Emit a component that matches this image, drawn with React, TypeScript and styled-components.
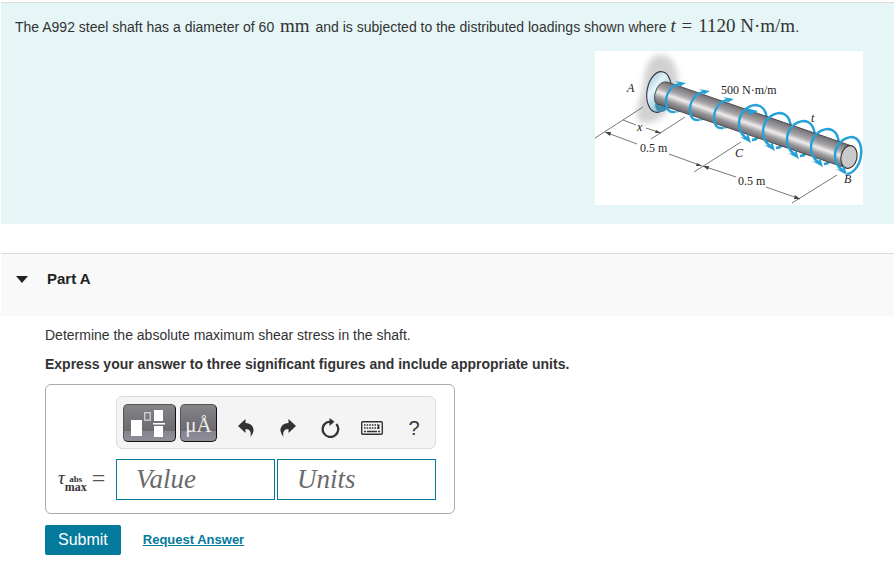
import React from "react";
import styled, { createGlobalStyle } from "styled-components";

const GlobalStyle = createGlobalStyle`
  * { box-sizing: border-box; }
  body {
    margin: 0;
    background: #fff;
    color: #333;
    font-family: "Liberation Sans", Arial, sans-serif;
    font-size: 14px;
    line-height: 20px;
  }
`;

const Page = styled.main`
  padding: 2px 0 16px 1px;
`;

const Problem = styled.section`
  display: flex;
  flex-direction: column;
  border-top: 1px solid #dcdcdc;
  background: #e6f6f7;
  padding: 12px 31px 19px 14px;
`;

const Statement = styled.p`
  margin: 0;
  line-height: 24px;
`;

const MathText = styled.span<{ $italic?: boolean; $spaced?: boolean }>`
  font-family: "Liberation Serif", "Times New Roman", serif;
  font-size: 19px;
  line-height: 20px;
  font-style: ${(p) => (p.$italic ? "italic" : "normal")};
  margin: 0 ${(p) => (p.$spaced ? 2 : 0)}px;
`;

const Figure = styled.figure`
  margin: 12px 0 0;
  align-self: flex-end;
  background: #fff;
  svg { display: block; }
`;

const PartHeader = styled.header`
  margin-top: 29px;
  border-top: 1px solid #dcdcdc;
  background: #f9f9f9;
  padding: 15px 15px 27px;
`;

const PartToggle = styled.button`
  display: flex;
  align-items: center;
  gap: 19px;
  border: 0;
  padding: 0;
  background: none;
  color: #222;
  font: bold 15px/20px "Liberation Sans", Arial, sans-serif;
`;

const PartBody = styled.section`
  padding: 9px 44px 0;
`;

const Paragraph = styled.p<{ $strong?: boolean }>`
  margin: 0 0 9px;
  font-weight: ${(p) => (p.$strong ? "bold" : "normal")};
`;

const AnswerBox = styled.div`
  display: grid;
  grid-template-columns: 58px auto;
  row-gap: 10px;
  width: fit-content;
  margin-top: 10px;
  border: 1px solid #aaa;
  border-radius: 6px;
  padding: 11px 18px 13px 12px;
`;

const Toolbar = styled.div`
  grid-column: 2;
  display: flex;
  align-items: center;
  border: 1px solid #ddd;
  border-radius: 6px;
  background: #f4f4f4;
  padding: 6px 0 6px 6px;
  height: 53px;
`;

const TemplateButton = styled.button<{ $wide?: boolean }>`
  width: ${(p) => (p.$wide ? 53 : 37)}px;
  height: 38px;
  margin-right: 4px;
  border: 1px solid #111;
  border-top-color: #555;
  border-left-color: #555;
  border-radius: 5px;
  padding: 0;
  background: linear-gradient(#858489, #6b6a6e 72%, #86858f 73%, #8e8d98);
  svg { display: block; }
`;

const IconButton = styled.button`
  display: flex;
  align-items: center;
  justify-content: center;
  width: 42px;
  height: 38px;
  border: 0;
  padding: 10px 0 0;
  background: none;
  color: #333;
  font: 20px/24px "Liberation Sans", Arial, sans-serif;
`;

const IconGroup = styled.div`
  display: flex;
  margin-left: 4px;
`;

const TauLabel = styled.label`
  display: flex;
  align-items: center;
  color: #333;
  font-family: "Liberation Serif", "Times New Roman", serif;
  padding-bottom: 4px;
`;

const Tau = styled.span`
  font-size: 19px;
  font-style: italic;
  line-height: 20px;
`;

const Subscript = styled.span`
  display: flex;
  flex-direction: column;
  align-items: center;
  margin: 13px 5px 0 0;
  font-size: 12px;
  font-weight: bold;
  line-height: 9px;
  small { font-size: 9px; font-weight: bold; line-height: 7px; }
`;

const Equals = styled.span`
  color: #555;
  font-size: 24px;
  line-height: 24px;
`;

const Fields = styled.div`
  display: flex;
  gap: 2px;
`;

const Field = styled.input`
  flex: 1;
  width: 159px;
  height: 41px;
  border: 1px solid #047a9c;
  border-radius: 0;
  padding: 0 19px;
  background: #fff;
  color: #333;
  font: italic 27px/36px "Liberation Serif", "Times New Roman", serif;
  &::placeholder { color: #6a6a6a; opacity: 1; }
`;

const Actions = styled.div`
  display: flex;
  align-items: center;
  gap: 22px;
  margin-top: 11px;
`;

const Submit = styled.button`
  height: 30px;
  border: 0;
  border-radius: 2px;
  padding: 0 13px;
  background: #047a9c;
  color: #fff;
  font: 16px/20px "Liberation Sans", Arial, sans-serif;
`;

const RequestLink = styled.a`
  color: #047a9c;
  font-size: 13px;
  font-weight: bold;
`;

const DiagramText = styled.text<{ $italic?: boolean }>`
  fill: #222;
  font-family: "Liberation Serif", "Times New Roman", serif;
  font-size: 12px;
  font-style: ${(p) => (p.$italic ? "italic" : "normal")};
`;

const nearLoops = [0, 1, 2];
const farLoops = [0, 1, 2, 3, 4];

function ShaftDiagram() {
  return (
    <svg width="268" height="154" viewBox="0 0 268 154" role="img" aria-label="Shaft fixed at A with distributed torques">
      <defs>
        <linearGradient id="steel" gradientUnits="userSpaceOnUse" x1="162" y1="63" x2="154" y2="86">
          <stop offset="0" stopColor="#77757a" />
          <stop offset="0.3" stopColor="#aaa7aa" />
          <stop offset="0.48" stopColor="#eeecec" />
          <stop offset="0.7" stopColor="#99979a" />
          <stop offset="1" stopColor="#5c5a5e" />
        </linearGradient>
        <linearGradient id="flange" x1="0" y1="0" x2="1" y2="1">
          <stop offset="0" stopColor="#8dbbd0" />
          <stop offset="0.35" stopColor="#e3f3fa" />
          <stop offset="0.6" stopColor="#b4d8e6" />
          <stop offset="1" stopColor="#3f8fb0" />
        </linearGradient>
        <filter id="soft" x="-30%" y="-30%" width="160%" height="160%">
          <feGaussianBlur stdDeviation="3" />
        </filter>
      </defs>

      <path d="M65 4C78 4 83 17 83 32C83 48 74 60 64 68C53 75 41 74 42 61C43 51 48 42 49 30C50 17 54 5 65 4Z" fill="#d2d1d1" filter="url(#soft)" />

      <path d="M48 56L0 87M90 66L56 88M28 69L41 74M51 77L66 82M10 81L42 93M74 103L107 115M108 115L141 126M99 121L146 91M171 136L205 148M197 152L242 124" stroke="#555" strokeWidth="0.8" fill="none" />
      <path d="M66 82L60 82L61 79ZM10 81L16 81L15 85ZM107 115L101 115L102 112ZM108 115L114 115L113 119ZM205 148L199 148L200 144Z" fill="#444" />

      {nearLoops.map((i) => (
        <path key={i} transform={`translate(${i * 24} ${i * 8})`} d="M80 61Q86 61 89 56" fill="none" stroke="#69bbe0" strokeWidth="1.6" />
      ))}
      {farLoops.slice(0, 4).map((i) => (
        <path key={i} transform={`translate(${i * 24} ${i * 8})`} d="M161 54C169 55 171 61 172 68M157 89Q161 89 163 86" fill="none" stroke="#26a0d6" strokeWidth="2.300" />
      ))}

      <ellipse cx="64" cy="41" rx="12" ry="20.5" transform="rotate(9 64 41)" fill="url(#flange)" stroke="#334" strokeWidth="1.1" />
      <path d="M60 52Q66 56 73 55Q72 61 65 61Q60 60 60 52Z" fill="#3f8dab" />
      <path d="M72 31Q66 30 62 37Q58 45 60 51Q62 54 66 54L251 117L257 95L72 31Z" fill="url(#steel)" stroke="#444" strokeWidth="0.9" />
      <ellipse cx="254" cy="106" rx="8" ry="11.5" transform="rotate(12 254 106)" fill="#c9c9cc" stroke="#333" strokeWidth="1.1" />

      {nearLoops.map((i) => (
        <g key={i} transform={`translate(${i * 24} ${i * 8})`}>
          <path d="M85 33C76 34 71 43 71 51C71 58 74 62 80 61" fill="none" stroke="#26a0d6" strokeWidth="2.300" />
          <path d="M80 30L91 32L84 36L85 33Z" fill="#26a0d6" />
        </g>
      ))}
      <path d="M151 57L163 60L155 64Z" fill="#26a0d6" />

      {farLoops.map((i) => (
        <g key={i} transform={`translate(${i * 24} ${i * 8})`}>
          <path d="M162 54C150 54 144 64 144 73C144 80 147 84 151 87" fill="none" stroke="#26a0d6" strokeWidth="2.500" />
          <path d="M145 86L151 87L153 82L156 92Z" fill="#26a0d6" />
        </g>
      ))}
      <path d="M257 86C265 87 267 96 266 104C265 114 259 122 252 123" fill="none" stroke="#26a0d6" strokeWidth="2.500" />

      <DiagramText x="32" y="41" $italic>A</DiagramText>
      <DiagramText x="126" y="43">500 N·m/m</DiagramText>
      <DiagramText x="42" y="80" $italic>x</DiagramText>
      <DiagramText x="45" y="101">0.5 m</DiagramText>
      <DiagramText x="140" y="106" $italic>C</DiagramText>
      <DiagramText x="143" y="134">0.5 m</DiagramText>
      <DiagramText x="216" y="71" $italic>t</DiagramText>
      <DiagramText x="249" y="132" $italic>B</DiagramText>
    </svg>
  );
}

function TemplatesIcon() {
  return (
    <svg width="51" height="36" viewBox="0 0 51 36" fill="#fff">
      <rect x="7" y="15" width="11" height="16" />
      <rect x="20.700" y="7.700" width="5.500" height="7.500" fill="none" stroke="#ccc" strokeWidth="1.400" />
      <rect x="30" y="5" width="9" height="11" />
      <rect x="29" y="18" width="12" height="1.500" />
      <rect x="30" y="21" width="9" height="11" />
    </svg>
  );
}

const UnitsGlyph = styled.span`
  display: block;
  color: #eee;
  font: 21px/40px "Liberation Serif", "Times New Roman", serif;
`;

function ArrowIcon({ flip }: { flip?: boolean }) {
  return (
    <svg width="16" height="18" viewBox="0 0 16 18">
      <path transform={flip ? "translate(16 0) scale(-1 1)" : undefined} d="M0 7L7.500 0V4C13 4 16 8 15.500 12Q15 15 12.500 18C13.500 13 12 10 7.500 10V14Z" fill="#333" />
    </svg>
  );
}

function ResetIcon() {
  return (
    <svg width="19" height="20" viewBox="0 0 19 20">
      <path d="M15.300 6A7.800 7.800 0 1 1 6 4.200Q7 3.800 9 3.800" fill="none" stroke="#333" strokeWidth="2.300" />
      <path d="M8.500 0L13.500 3.800L8.500 8Z" fill="#333" />
    </svg>
  );
}

function KeyboardIcon() {
  return (
    <svg width="22" height="14" viewBox="0 0 22 14" fill="none" stroke="#333">
      <rect x="0.700" y="0.700" width="20.600" height="12.600" rx="1" strokeWidth="1.400" />
      <path d="M3 4H19M3 7H19" strokeWidth="1.700" strokeDasharray="1.600 1" />
      <path d="M3 10.500H5M6 10.500H16M17 10.500H19M17.500 4V8" strokeWidth="1.500" />
    </svg>
  );
}

export default function App() {
  return (
    <Page>
      <GlobalStyle />
      <Problem>
        <Statement>
          The A992 steel shaft has a diameter of 60 <MathText $spaced>mm</MathText> and is subjected to the distributed loadings shown where{" "}
          <MathText $italic>t</MathText> <MathText $spaced>=</MathText> <MathText>1120 N·m/m</MathText>.
        </Statement>
        <Figure>
          <ShaftDiagram />
        </Figure>
      </Problem>

      <PartHeader>
        <PartToggle type="button" aria-expanded="true">
          <svg width="12" height="7" viewBox="0 0 12 7">
            <path d="M0 0H12L6 7Z" fill="#222" />
          </svg>
          Part A
        </PartToggle>
      </PartHeader>

      <PartBody>
        <Paragraph>Determine the absolute maximum shear stress in the shaft.</Paragraph>
        <Paragraph $strong>Express your answer to three significant figures and include appropriate units.</Paragraph>
        <AnswerBox>
          <Toolbar>
            <TemplateButton type="button" $wide aria-label="Templates">
              <TemplatesIcon />
            </TemplateButton>
            <TemplateButton type="button">
              <UnitsGlyph>μÅ</UnitsGlyph>
            </TemplateButton>
            <IconGroup>
              <IconButton type="button" aria-label="Undo"><ArrowIcon /></IconButton>
              <IconButton type="button" aria-label="Redo"><ArrowIcon flip /></IconButton>
              <IconButton type="button" aria-label="Reset"><ResetIcon /></IconButton>
              <IconButton type="button" aria-label="Keyboard"><KeyboardIcon /></IconButton>
              <IconButton type="button">?</IconButton>
            </IconGroup>
          </Toolbar>
          <TauLabel htmlFor="value">
            <Tau>τ</Tau>
            <Subscript>
              <small>abs</small>
              max
            </Subscript>
            <Equals>=</Equals>
          </TauLabel>
          <Fields>
            <Field id="value" placeholder="Value" />
            <Field aria-label="Units" placeholder="Units" />
          </Fields>
        </AnswerBox>
        <Actions>
          <Submit type="button">Submit</Submit>
          <RequestLink href="#request">Request Answer</RequestLink>
        </Actions>
      </PartBody>
    </Page>
  );
}
